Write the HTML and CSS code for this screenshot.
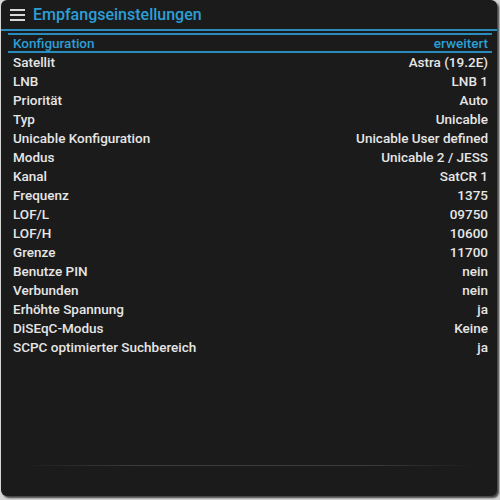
FILE: index.html
```html
<!DOCTYPE html>
<html lang="de">
<head>
<meta charset="utf-8">
<title>Empfangseinstellungen</title>
<link rel="stylesheet" href="styles.css">
</head>
<body>
<div class="window">
  <header class="titlebar">
    <svg class="menu-icon" width="16" height="12" viewBox="0 0 16 12">
      <rect x="0" y="0" width="15" height="2" fill="#d8d8d8"/>
      <rect x="0" y="5" width="15" height="2" fill="#d8d8d8"/>
      <rect x="0" y="10" width="15" height="2" fill="#d8d8d8"/>
    </svg>
    <h1 class="title">Empfangseinstellungen</h1>
  </header>
  <div class="content">
    <div class="section-head">
      <span>Konfiguration</span>
      <span>erweitert</span>
    </div>
    <ul class="rows">
      <li><span>Satellit</span><span>Astra (19.2E)</span></li>
      <li><span>LNB</span><span>LNB 1</span></li>
      <li><span>Priorität</span><span>Auto</span></li>
      <li><span>Typ</span><span>Unicable</span></li>
      <li><span>Unicable Konfiguration</span><span>Unicable User defined</span></li>
      <li><span>Modus</span><span>Unicable 2 / JESS</span></li>
      <li><span>Kanal</span><span>SatCR 1</span></li>
      <li><span>Frequenz</span><span>1375</span></li>
      <li><span>LOF/L</span><span>09750</span></li>
      <li><span>LOF/H</span><span>10600</span></li>
      <li><span>Grenze</span><span>11700</span></li>
      <li><span>Benutze PIN</span><span>nein</span></li>
      <li><span>Verbunden</span><span>nein</span></li>
      <li><span>Erhöhte Spannung</span><span>ja</span></li>
      <li><span>DiSEqC-Modus</span><span>Keine</span></li>
      <li><span>SCPC optimierter Suchbereich</span><span>ja</span></li>
    </ul>
  </div>
  <div class="spacer"></div>
  <div class="footer-line"></div>
</div>
</body>
</html>
```
FILE: styles.css
```css
* { box-sizing: border-box; }
html, body {
  margin: 0;
  padding: 0;
  width: 500px;
  height: 500px;
  background: #d6d6d6;
  overflow: hidden;
}
body {
  font-family: Roboto, "Liberation Sans", sans-serif;
}
.window {
  margin-left: 1px;
  width: 496px;
  height: 496px;
  background: #1b1b1b;
  border-radius: 6px;
  box-shadow: 2px 2px 2px rgba(0,0,0,0.7);
  display: flex;
  flex-direction: column;
  overflow: hidden;
}
.titlebar {
  height: 31px;
  display: flex;
  align-items: center;
  padding-left: 9px;
  border-bottom: 2px solid #2a8cba;
  flex-shrink: 0;
}
.menu-icon {
  display: block;
  margin-right: 7px;
  margin-top: 1px;
}
.title {
  margin: 0;
  font-size: 16px;
  font-weight: 500;
  color: #2b9fd6;
  line-height: 20px;
}
.content {
  padding: 2px 5px 0 7px;
}
.section-head {
  display: flex;
  justify-content: space-between;
  border-top: 2px solid #2a8cba;
  border-bottom: 2px solid #2a8cba;
  height: 20px;
  padding: 0 4px 0 5px;
  align-items: center;
  font-size: 13.5px;
  font-weight: 500;
  color: #2b9fd6;
}
.rows {
  list-style: none;
  margin: -1px 0 0 0;
  padding: 0 4px 0 5px;
}
.rows li {
  display: flex;
  justify-content: space-between;
  height: 19px;
  align-items: center;
  font-size: 13.5px;
  font-weight: 500;
  color: #e6e6e6;
}
.spacer { flex: 1; }
.footer-line {
  height: 1px;
  margin: 0 20px 30px 20px;
  background: linear-gradient(to right, rgba(70,70,70,0), #3c3c3c 25%, #3c3c3c 75%, rgba(70,70,70,0));
  flex-shrink: 0;
}
```
